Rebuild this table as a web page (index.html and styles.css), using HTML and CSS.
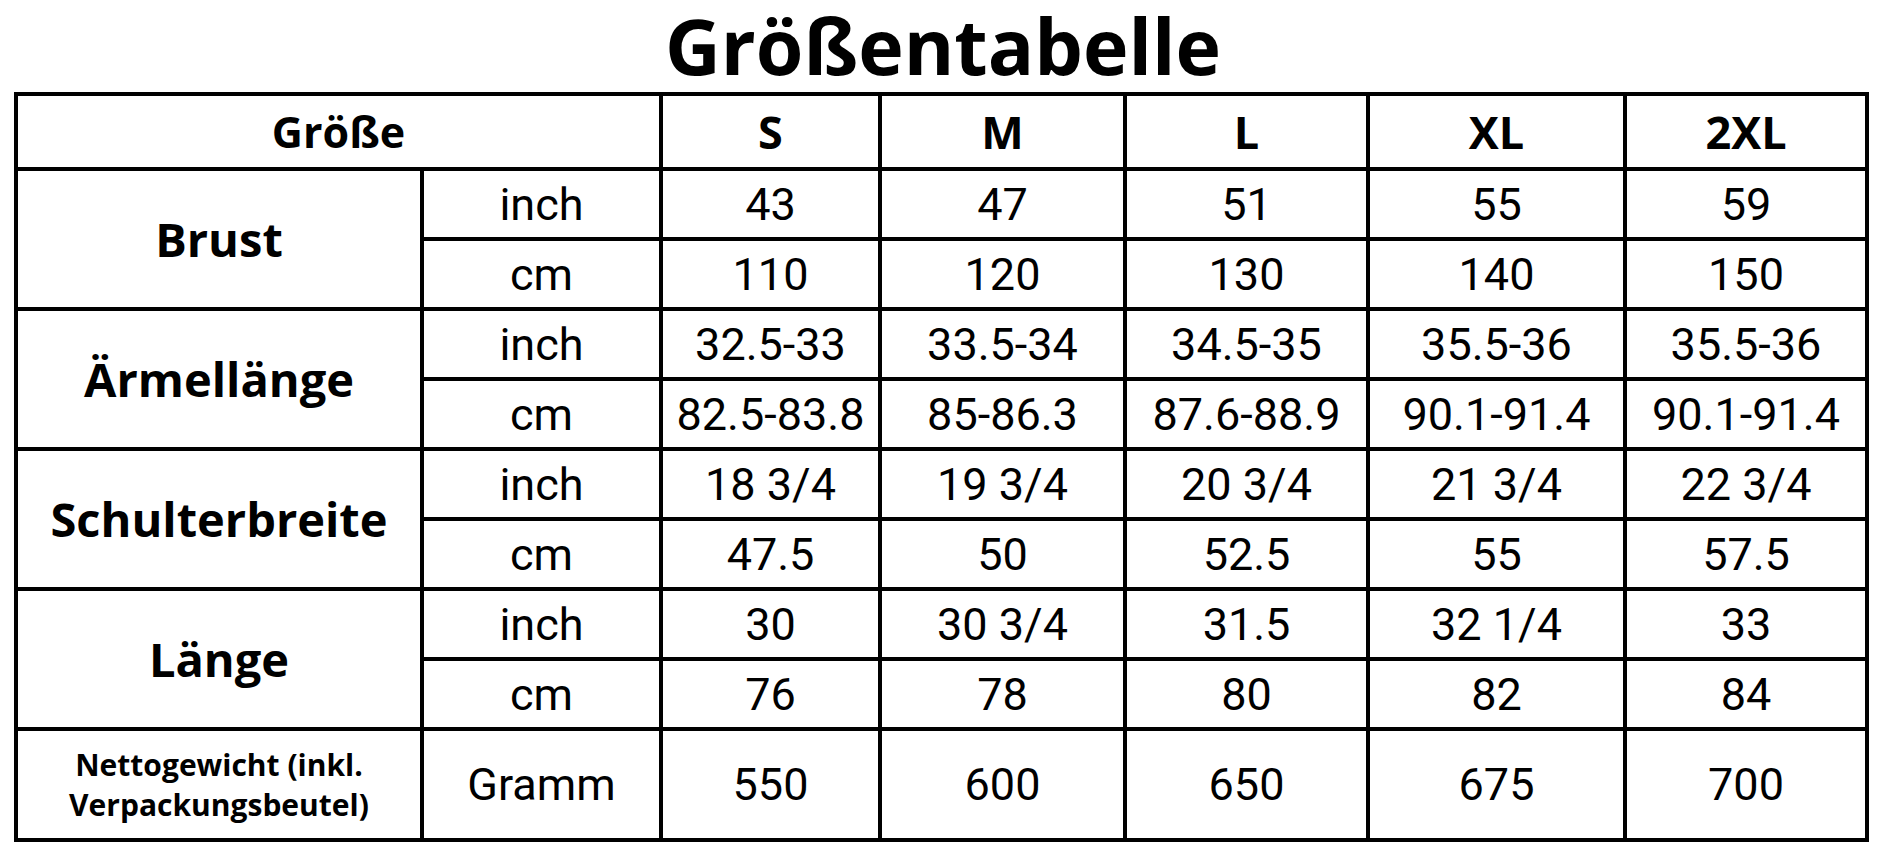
FILE: index.html
```html
<!DOCTYPE html>
<html lang="de">
<head>
<meta charset="utf-8">
<title>Größentabelle</title>
<link rel="stylesheet" href="styles.css">
</head>
<body>
<h1 class="title">Größentabelle</h1>
<div class="chart">
  <div class="cell head head-main span-c2">Größe</div>
  <div class="cell head">S</div>
  <div class="cell head">M</div>
  <div class="cell head">L</div>
  <div class="cell head">XL</div>
  <div class="cell head">2XL</div>

  <div class="cell label span-r2">Brust</div>
  <div class="cell">inch</div>
  <div class="cell">43</div><div class="cell">47</div><div class="cell">51</div><div class="cell">55</div><div class="cell">59</div>
  <div class="cell">cm</div>
  <div class="cell">110</div><div class="cell">120</div><div class="cell">130</div><div class="cell">140</div><div class="cell">150</div>

  <div class="cell label span-r2">Ärmellänge</div>
  <div class="cell">inch</div>
  <div class="cell">32.5-33</div><div class="cell">33.5-34</div><div class="cell">34.5-35</div><div class="cell">35.5-36</div><div class="cell">35.5-36</div>
  <div class="cell">cm</div>
  <div class="cell">82.5-83.8</div><div class="cell">85-86.3</div><div class="cell">87.6-88.9</div><div class="cell">90.1-91.4</div><div class="cell">90.1-91.4</div>

  <div class="cell label span-r2">Schulterbreite</div>
  <div class="cell">inch</div>
  <div class="cell">18 3/4</div><div class="cell">19 3/4</div><div class="cell">20 3/4</div><div class="cell">21 3/4</div><div class="cell">22 3/4</div>
  <div class="cell">cm</div>
  <div class="cell">47.5</div><div class="cell">50</div><div class="cell">52.5</div><div class="cell">55</div><div class="cell">57.5</div>

  <div class="cell label span-r2">Länge</div>
  <div class="cell">inch</div>
  <div class="cell">30</div><div class="cell">30 3/4</div><div class="cell">31.5</div><div class="cell">32 1/4</div><div class="cell">33</div>
  <div class="cell">cm</div>
  <div class="cell">76</div><div class="cell">78</div><div class="cell">80</div><div class="cell">82</div><div class="cell">84</div>

  <div class="cell label label-small">Nettogewicht (inkl.<br>Verpackungsbeutel)</div>
  <div class="cell">Gramm</div>
  <div class="cell">550</div><div class="cell">600</div><div class="cell">650</div><div class="cell">675</div><div class="cell">700</div>
</div>
</body>
</html>
```
FILE: styles.css
```css
html, body {
  margin: 0;
  padding: 0;
  background: #fff;
  color: #000;
}

.title {
  margin: 0;
  padding: 7px 0 8px;
  height: 77px;
  line-height: 77px;
  text-align: center;
  font-family: "Open Sans", "Noto Sans", sans-serif;
  font-weight: 700;
  font-size: 77px;
  color: #000;
}

.chart {
  display: grid;
  grid-template-columns: 402px 235px 215px 241px 239px 253px 238px;
  grid-template-rows: 71px repeat(8, 66px) 107px;
  gap: 4px;
  padding: 4px;
  background: #000;
  width: max-content;
  margin-left: 14px;
}

.cell {
  background: #fff;
  display: flex;
  align-items: center;
  justify-content: center;
  text-align: center;
  font-family: Roboto, "Liberation Sans", sans-serif;
  font-weight: 400;
  font-size: 45px;
  white-space: nowrap;
}

.head,
.label {
  font-family: "Open Sans", "Noto Sans", sans-serif;
  font-weight: 700;
  font-size: 45px;
}

.label {
  font-size: 47px;
}

.head-main {
  font-size: 43px;
}

.label-small {
  font-size: 30px;
  line-height: 40px;
}

.span-c2 {
  grid-column: span 2;
}

.span-r2 {
  grid-row: span 2;
}
```
